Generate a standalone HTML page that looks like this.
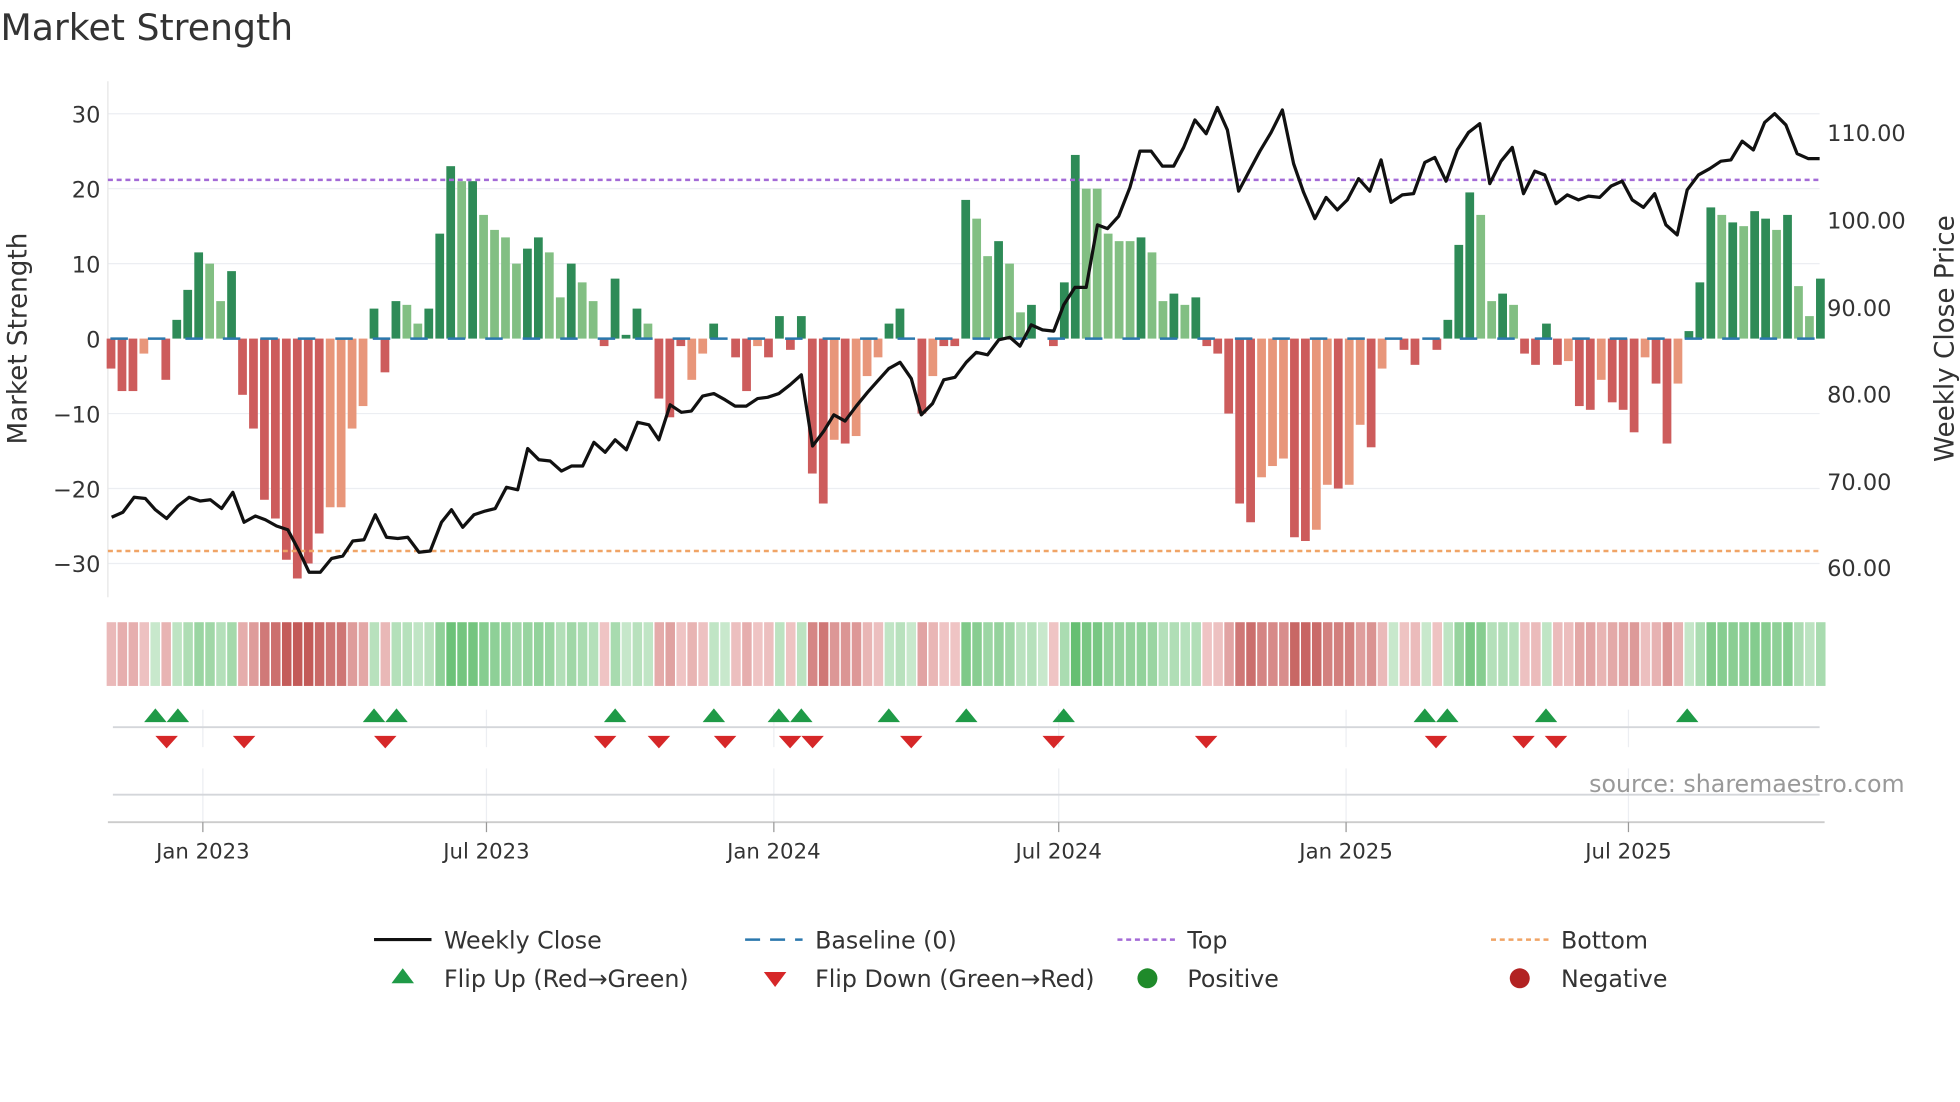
<!DOCTYPE html>
<html><head><meta charset="utf-8"><style>
html,body{margin:0;padding:0;background:#fff;}
svg{display:block;font-family:"DejaVu Sans","Liberation Sans",sans-serif;}
</style></head><body>
<svg id="s" width="1960" height="1102" viewBox="0 0 1568 882" xmlns="http://www.w3.org/2000/svg">
<rect width="1568" height="882" fill="#fff"/>
<text x="0" y="32" font-size="29" fill="#333">Market Strength</text>
<g stroke="#eceef2" stroke-width="1">
<line x1="86" y1="91" x2="1456" y2="91"/><line x1="86" y1="151" x2="1456" y2="151"/><line x1="86" y1="211" x2="1456" y2="211"/><line x1="86" y1="331" x2="1456" y2="331"/><line x1="86" y1="391" x2="1456" y2="391"/><line x1="86" y1="451" x2="1456" y2="451"/>
</g>
<line x1="86" y1="65" x2="86" y2="478" stroke="#e6e6e6"/>
<g font-size="18" fill="#333" text-anchor="end">
<text x="80" y="98">30</text><text x="80" y="158">20</text><text x="80" y="218">10</text><text x="80" y="278">0</text><text x="80" y="338">−10</text><text x="80" y="398">−20</text><text x="80" y="458">−30</text>
</g>
<g font-size="18" fill="#333">
<text x="1462" y="113">110.00</text><text x="1462" y="183">100.00</text><text x="1462" y="253">90.00</text><text x="1462" y="322">80.00</text><text x="1462" y="392">70.00</text><text x="1462" y="461">60.00</text>
</g>
<text transform="translate(21,271) rotate(-90)" font-size="21" fill="#333" text-anchor="middle">Market Strength</text>
<text transform="translate(1563,271) rotate(-90)" font-size="21" fill="#333" text-anchor="middle">Weekly Close Price</text>
<g id="bars"></g>
<line x1="86" y1="271" x2="1456" y2="271" stroke="#2b78ad" stroke-width="2" stroke-dasharray="14,16" stroke-dashoffset="-2"/>
<line x1="86" y1="144" x2="1456" y2="144" stroke="#a36ad6" stroke-width="2" stroke-dasharray="4,3"/>
<line x1="86" y1="441" x2="1456" y2="441" stroke="#f0a466" stroke-width="2" stroke-dasharray="4,3"/>
<polyline id="price" fill="none" stroke="#111" stroke-width="2.6" stroke-linejoin="round"/>
<g id="heat"></g>
<g stroke="#eceef2"><line x1="162" y1="568" x2="162" y2="598"/><line x1="389" y1="568" x2="389" y2="598"/><line x1="619" y1="568" x2="619" y2="598"/><line x1="847" y1="568" x2="847" y2="598"/><line x1="1077" y1="568" x2="1077" y2="598"/><line x1="1303" y1="568" x2="1303" y2="598"/>
<line x1="162" y1="615" x2="162" y2="658"/><line x1="389" y1="615" x2="389" y2="658"/><line x1="619" y1="615" x2="619" y2="658"/><line x1="847" y1="615" x2="847" y2="658"/><line x1="1077" y1="615" x2="1077" y2="658"/><line x1="1303" y1="615" x2="1303" y2="658"/></g>
<line x1="90" y1="582" x2="1456" y2="582" stroke="#d4d6da" stroke-width="1.5"/>
<line x1="90" y1="636" x2="1456" y2="636" stroke="#d4d6da" stroke-width="1.5"/>
<line x1="86" y1="658" x2="1460" y2="658" stroke="#ccc" stroke-width="1.5"/>
<g id="mk"></g>
<text x="1524" y="634" font-size="19" fill="#999" text-anchor="end">source: sharemaestro.com</text>
<g stroke="#999"><line x1="162" y1="658" x2="162" y2="666"/><line x1="389" y1="658" x2="389" y2="666"/><line x1="619" y1="658" x2="619" y2="666"/><line x1="847" y1="658" x2="847" y2="666"/><line x1="1077" y1="658" x2="1077" y2="666"/><line x1="1303" y1="658" x2="1303" y2="666"/></g>
<g font-size="17" fill="#333" text-anchor="middle">
<text x="162" y="687">Jan 2023</text><text x="389" y="687">Jul 2023</text><text x="619" y="687">Jan 2024</text><text x="847" y="687">Jul 2024</text><text x="1077" y="687">Jan 2025</text><text x="1303" y="687">Jul 2025</text>
</g>
<g font-size="19" fill="#333">
<line x1="299" y1="752" x2="345" y2="752" stroke="#111" stroke-width="2.5"/><text x="355" y="759">Weekly Close</text>
<line x1="596" y1="752" x2="642" y2="752" stroke="#2b78ad" stroke-width="2" stroke-dasharray="12,8"/><text x="652" y="759">Baseline (0)</text>
<line x1="894" y1="752" x2="940" y2="752" stroke="#a36ad6" stroke-width="2" stroke-dasharray="4,3"/><text x="950" y="759">Top</text>
<line x1="1193" y1="752" x2="1239" y2="752" stroke="#f0a466" stroke-width="2" stroke-dasharray="4,3"/><text x="1249" y="759">Bottom</text>
<polygon points="313,787 331,787 322,775" fill="#1f9a47"/><text x="355" y="790">Flip Up (Red→Green)</text>
<polygon points="611,778 629,778 620,790" fill="#d62728"/><text x="652" y="790">Flip Down (Green→Red)</text>
<circle cx="918" cy="783" r="8" fill="#1f8a2a"/><text x="950" y="790">Positive</text>
<circle cx="1216" cy="783" r="8" fill="#b22222"/><text x="1249" y="790">Negative</text>
</g>
</svg>
<script>
var NS="http://www.w3.org/2000/svg";
function el(p,t,a){var e=document.createElementNS(NS,t);for(var k in a)e.setAttribute(k,a[k]);p.appendChild(e);return e;}
var d="-4,-7,-7,-2L,0,-5.5,2.5,6.5,11.5,10L,5L,9,-7.5,-12,-21.5,-24,-29.5,-32,-30,-26,-22.5L,-22.5L,-12L,-9L,4,-4.5,5,4.5L,2L,4,14,23,21L,21,16.5L,14.5L,13.5L,10L,12,13.5,11.5L,5.5L,10,7.5L,5L,-1,8,0.5,4,2L,-8,-10.5,-1,-5.5L,-2L,2,0,-2.5,-7,-1L,-2.5,3,-1.5,3,-18,-22,-13.5L,-14,-13L,-5L,-2.5L,2,4,0,-10,-5L,-1,-1,18.5,16L,11L,13,10L,3.5L,4.5,0,-1,7.5,24.5,20L,20L,14L,13L,13L,13.5,11.5L,5L,6,4.5L,5.5,-1,-2,-10,-22,-24.5,-18.5L,-17L,-16L,-26.5,-27,-25.5L,-19.5L,-20,-19.5L,-11.5L,-14.5,-4L,0,-1.5,-3.5,0,-1.5,2.5,12.5,19.5,16.5L,5L,6,4.5L,-2,-3.5,2,-3.5,-3L,-9,-9.5,-5.5L,-8.5,-9.5,-12.5,-2.5L,-6,-14,-6L,1,7.5,17.5,16.5L,15.5,15L,17,16,14.5L,16.5,7L,3L,8".split(",");
var bars=document.getElementById("bars"),heat=document.getElementById("heat");
var pitch=8.77;
for(var i=0;i<d.length;i++){
 var s=d[i],L=s.indexOf("L")>=0,v=parseFloat(s),x=89+pitch*i;
 var c=v>=0?(L?"#82bf83":"#2e8b57"):(L?"#e8967a":"#cd5c5c");
 if(v!=0){var y=v>0?271-v*6:271;el(bars,"rect",{x:x-4,y:y,width:7,height:Math.abs(v)*6,fill:c});}
 var a=Math.min(1,Math.abs(v)/30),hc;
 if(v>=0){hc="rgb("+Math.round(200-120*a)+","+Math.round(232-50*a)+","+Math.round(204-110*a)+")";}
 else{hc="rgb("+Math.round(240-45*a)+","+Math.round(200-110*a)+","+Math.round(200-112*a)+")";}
 el(heat,"rect",{x:x-4,y:498,width:7.6,height:51,fill:hc});
}
var p="89,414 98,410 107,398 116,399 124,408 133,415 142,405 151,398 160,401 168,400 177,407 186,394 195,418 204,413 212,416 221,421 230,424 239,441 247,458 256,458 265,447 274,445 282,433 291,432 300,412 309,430 318,431 326,430 335,442 344,441 353,418 361,408 370,422 379,412 388,409 396,407 405,390 414,392 422,359 431,368 440,369 449,377 457,373 466,373 475,354 484,362 492,352 501,360 510,338 519,340 527,352 536,324 545,330 553,329 562,317 571,315 580,320 588,325 597,325 606,319 614,318 623,315 632,308 641,300 650,357 659,345 667,332 676,337 685,325 694,314 702,305 711,295 720,290 729,303 737,332 746,323 755,304 764,302 773,290 781,282 790,284 799,272 808,270 816,277 825,260 834,264 843,265 851,244 860,230 869,230 878,180 886,183 895,173 904,150 912,121 921,121 930,133 939,133 947,118 956,96 965,107 974,86 982,104 991,153 1000,136 1008,121 1017,106 1026,88 1035,131 1043,154 1052,175 1061,158 1070,168 1078,160 1087,143 1096,153 1105,128 1113,162 1122,156 1131,155 1140,130 1148,126 1157,145 1166,120 1175,106 1184,99 1192,147 1201,129 1210,118 1219,155 1228,137 1236,140 1245,163 1254,156 1263,160 1271,157 1280,158 1289,149 1298,145 1306,160 1315,166 1324,155 1333,180 1342,188 1350,152 1359,140 1368,135 1377,129 1385,128 1394,113 1403,120 1412,98 1420,91 1429,100 1438,123 1447,127 1456,127";
document.getElementById("price").setAttribute("points",p);
var mk=document.getElementById("mk");
[124,142,299,317,492,571,623,641,711,773,851,1140,1158,1237,1350].forEach(function(x){el(mk,"polygon",{points:(x-9)+",578 "+(x+9)+",578 "+x+",567",fill:"#1f9a47"});});
[133,195,308,484,527,580,632,650,729,843,965,1149,1219,1245].forEach(function(x){el(mk,"polygon",{points:(x-9)+",589 "+(x+9)+",589 "+x+",599",fill:"#d62728"});});
</script>
</body></html>
